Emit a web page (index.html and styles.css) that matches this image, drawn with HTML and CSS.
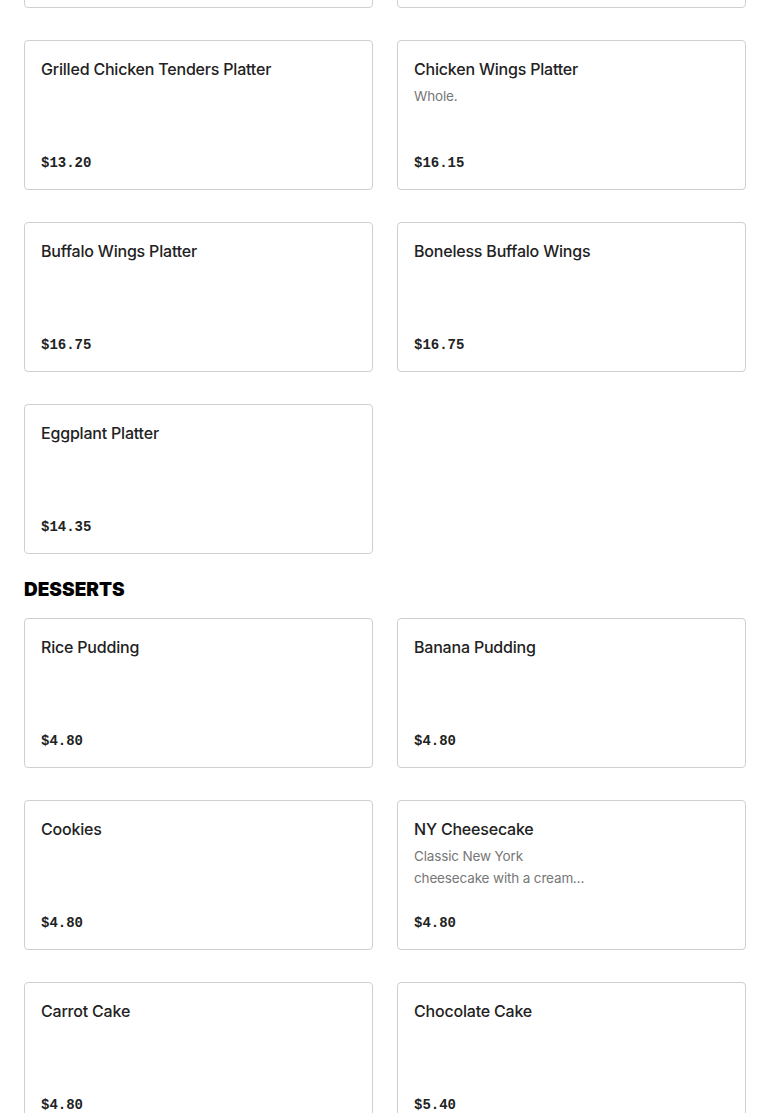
FILE: index.html
```html
<!DOCTYPE html>
<html>
<head>
<meta charset="utf-8">
<link rel="stylesheet" href="styles.css">
</head>
<body>
<main class="menu">
  <section class="section section-scrolled">
    <div class="grid">
      <div class="card"><div class="title">Chicken Tenders Platter</div><div class="price">$13.20</div></div>
      <div class="card"><div class="title">Chicken Platter</div><div class="price">$14.35</div></div>
      <div class="card"><div class="title">Grilled Chicken Tenders Platter</div><div class="price">$13.20</div></div>
      <div class="card"><div class="title">Chicken Wings Platter</div><div class="desc">Whole.</div><div class="price">$16.15</div></div>
      <div class="card"><div class="title">Buffalo Wings Platter</div><div class="price">$16.75</div></div>
      <div class="card"><div class="title">Boneless Buffalo Wings</div><div class="price">$16.75</div></div>
      <div class="card"><div class="title">Eggplant Platter</div><div class="price">$14.35</div></div>
    </div>
  </section>
  <section class="section">
    <h2 class="heading">DESSERTS</h2>
    <div class="grid">
      <div class="card"><div class="title">Rice Pudding</div><div class="price">$4.80</div></div>
      <div class="card"><div class="title">Banana Pudding</div><div class="price">$4.80</div></div>
      <div class="card"><div class="title">Cookies</div><div class="price">$4.80</div></div>
      <div class="card"><div class="title">NY Cheesecake</div><div class="desc">Classic New York cheesecake with a creamy graham cracker crust.</div><div class="price">$4.80</div></div>
      <div class="card"><div class="title">Carrot Cake</div><div class="price">$4.80</div></div>
      <div class="card"><div class="title">Chocolate Cake</div><div class="price">$5.40</div></div>
    </div>
  </section>
</main>
</body>
</html>
```

FILE: styles.css
```css
* { box-sizing: border-box; }
html, body { margin: 0; padding: 0; background: #fff; }
body {
  font-family: Inter, "Liberation Sans", sans-serif;
  color: #222;
  overflow: hidden;
}
.menu {
  padding: 0 24px;
}
.section-scrolled {
  margin-top: -142px;
}
.grid {
  display: grid;
  grid-template-columns: 1fr 1fr;
  column-gap: 24px;
  row-gap: 32px;
}
.card {
  height: 150px;
  border: 1px solid #cfcfcf;
  border-radius: 4px;
  padding: 16px;
  display: flex;
  flex-direction: column;
}
.title {
  font-size: 16px;
  font-weight: 500;
  line-height: 24px;
  color: #222;
  letter-spacing: -0.2px;
}
.desc {
  margin-top: 4px;
  font-size: 13.5px;
  line-height: 22px;
  color: #777;
  letter-spacing: -0.15px;
  width: 176px;
  display: -webkit-box;
  -webkit-line-clamp: 2;
  -webkit-box-orient: vertical;
  overflow: hidden;
}
.price {
  margin-top: auto;
  font-family: "Liberation Mono", monospace;
  font-size: 14px;
  font-weight: 700;
  line-height: 20px;
  color: #222;
}
.heading {
  margin: 24px 0 16px;
  font-size: 19px;
  font-weight: 900;
  line-height: 24px;
  color: #000;
}
```
